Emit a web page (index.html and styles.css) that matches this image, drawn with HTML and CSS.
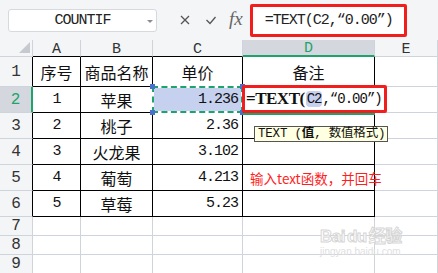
FILE: index.html
```html
<!DOCTYPE html>
<html lang="zh-CN">
<head>
    <meta charset="UTF-8">
    <title>TEXT 函数</title>
    <link rel="stylesheet" href="styles.css">
</head>
<body>
    <div class="toolbar">
        <div class="namebox">
            <span>COUNTIF</span>
            <i class="caret"></i>
        </div>
        <svg class="icon" viewBox="0 0 10 10"><path d="M1 1L9 9M9 1L1 9"/></svg>
        <svg class="icon" viewBox="0 0 10 10"><path d="M0.5 5L4 8.5L9.5 2"/></svg>
        <span class="fx">fx</span>
        <div class="formula">=TEXT(C2,“0.00”)</div>
    </div>

    <div class="sheet">
        <!-- 列标题 -->
        <div class="corner"><i class="tri"></i></div>
        <div class="ch top">A</div>
        <div class="ch top">B</div>
        <div class="ch top">C</div>
        <div class="ch on">D</div>
        <div class="ch">E</div>

        <!-- 1 -->
        <div class="rh t">1</div>
        <div class="c t">序号</div>
        <div class="c t">商品名称</div>
        <div class="c t">单价</div>
        <div class="c t">备注</div>
        <div class="c"></div>

        <!-- 2 -->
        <div class="rh on">2</div>
        <div class="c t num">1</div>
        <div class="c t">苹果</div>
        <div class="c t num right sel-cell">
            <span class="sel"></span>
            <i class="dot tl"></i><i class="dot bl"></i><i class="dot tr"></i><i class="dot br"></i>
            <span class="val">1.236</span>
        </div>
        <div class="c t active">
            <span class="edit"><b>=TEXT(</b><span class="ref">C2</span>,“0.00”)</span>
            <span class="tip">TEXT (<b>值</b>, 数值格式)</span>
        </div>
        <div class="c"></div>

        <!-- 3 -->
        <div class="rh t">3</div>
        <div class="c t num">2</div>
        <div class="c t">桃子</div>
        <div class="c t num right">2.36</div>
        <div class="c t"></div>
        <div class="c"></div>

        <!-- 4 -->
        <div class="rh t">4</div>
        <div class="c t num">3</div>
        <div class="c t">火龙果</div>
        <div class="c t num right">3.102</div>
        <div class="c t"></div>
        <div class="c"></div>

        <!-- 5 -->
        <div class="rh t">5</div>
        <div class="c t num">4</div>
        <div class="c t">葡萄</div>
        <div class="c t num right">4.213</div>
        <div class="c t left"><span class="note">输入text函数，并回车</span></div>
        <div class="c"></div>

        <!-- 6 -->
        <div class="rh t">6</div>
        <div class="c t num">5</div>
        <div class="c t">草莓</div>
        <div class="c t num right">5.23</div>
        <div class="c t"></div>
        <div class="c"></div>

        <!-- 7-9 -->
        <div class="rh">7</div>
        <div class="c"></div><div class="c"></div><div class="c"></div><div class="c"></div><div class="c"></div>
        <div class="rh">8</div>
        <div class="c"></div><div class="c"></div><div class="c"></div><div class="c"></div><div class="c"></div>
        <div class="rh">9</div>
        <div class="c"></div><div class="c"></div><div class="c"></div><div class="c"></div><div class="c"></div>

        <div class="mark">
            <span class="mark-logo">Bai<span class="paw">du</span>经验</span>
            <span class="mark-url">jingyan.baidu.com</span>
        </div>
    </div>
</body>
</html>
```

FILE: styles.css
```css
* {
    box-sizing: border-box;
    margin: 0;
    padding: 0;
}

html, body {
    width: 438px;
    height: 273px;
    overflow: hidden;
}

body {
    background-color: #fff;
    color: #222;
    font-family: "Liberation Mono", "Noto Sans CJK SC", monospace;
}

/* 编辑栏 */
.toolbar {
    height: 40px;
    display: flex;
    align-items: center;
    background-color: #f4f5f7;
}

.namebox {
    width: 149px;
    height: 23px;
    margin-left: 8px;
    margin-right: 23px;
    background-color: #fff;
    border: 1px solid #d6d9de;
    border-radius: 3px;
    display: flex;
    align-items: center;
    justify-content: center;
    position: relative;
    font-size: 15px;
    letter-spacing: -1px;
    color: #222;
}

.caret {
    position: absolute;
    right: 3px;
    top: 10px;
    border-left: 3px solid transparent;
    border-right: 3px solid transparent;
    border-top: 3px solid #8a8d93;
}

.icon {
    width: 10px;
    height: 10px;
    margin-right: 16px;
    fill: none;
    stroke: #555;
    stroke-width: 1.3;
}

.fx {
    font-family: "Liberation Serif", serif;
    font-style: italic;
    font-size: 19px;
    color: #666;
    margin-left: -3px;
    margin-right: 7px;
    margin-top: -3px;
}

.formula {
    width: 157px;
    height: 33px;
    border: 3px solid #f21d1d;
    border-radius: 2px;
    background-color: #fff;
    display: flex;
    align-items: center;
    padding-left: 12px;
    font-size: 15px;
    letter-spacing: -1px;
    color: #222;
}

/* 表格 */
.sheet {
    position: relative;
    display: grid;
    grid-template-columns: 33px 48px 72px 90px 132px 63px;
    grid-template-rows: 17px 30px repeat(5, 26px) repeat(3, 19px);
}

.sheet > div {
    display: flex;
    align-items: center;
    justify-content: center;
    border-right: 1px solid #cfd3dc;
    border-bottom: 1px solid #cfd3dc;
    position: relative;
}

.corner, .ch, .rh {
    background-color: #f4f5f7;
    color: #333;
    font-size: 15px;
}

.corner {
    justify-content: flex-end !important;
    align-items: flex-end !important;
    padding: 0 2px 3px 0;
}

.tri {
    border-left: 11px solid transparent;
    border-bottom: 11px solid #c6c9cf;
}

.ch {
    padding-top: 2px;
}

.ch.top {
    border-bottom-color: #000 !important;
}

.ch.on {
    background-color: #d4d7de;
    color: #1fa36d;
    border-bottom: 2px solid #1fa36d !important;
}

.rh {
    font-size: 16px;
}

.rh.t {
    border-right-color: #000 !important;
}

.rh.on {
    background-color: #d4d7de;
    color: #1fa36d;
    border-right: 2px solid #1fa36d !important;
}

.c {
    font-size: 16px;
    color: #111;
}

.c.t {
    border-right-color: #000 !important;
    border-bottom-color: #000 !important;
}

.num {
    font-size: 15px;
    letter-spacing: -1px;
}

.right {
    justify-content: flex-end !important;
    padding-right: 4px;
}

.left {
    justify-content: flex-start !important;
    padding-left: 7px;
}

/* 选中的 C2 */
.sel-cell {
    background-color: #c6d0ef;
    z-index: 1;
}

.sel {
    position: absolute;
    left: -1px;
    top: -1px;
    right: -1px;
    bottom: -1px;
    border: 2px dashed #1fa36d;
    background-color: #fff;
    box-shadow: inset 0 0 0 60px #c6d0ef;
}

.val {
    position: relative;
    z-index: 1;
}

.dot {
    position: absolute;
    width: 5px;
    height: 5px;
    background-color: #4a6fcf;
    z-index: 2;
}

.dot.tl { left: -3px; top: -3px; }
.dot.bl { left: -3px; bottom: -3px; }
.dot.tr { right: -3px; top: -3px; }
.dot.br { right: -3px; bottom: -3px; }

/* 正在编辑的 D2 */
.active {
    z-index: 3;
}

.active::after {
    content: "";
    position: absolute;
    left: 0;
    right: -1px;
    bottom: -3px;
    height: 2px;
    background-color: #1fa36d;
}

.edit {
    position: absolute;
    left: -1px;
    top: -2px;
    width: 145px;
    height: 28px;
    border: 3px solid #f21d1d;
    border-radius: 2px;
    background-color: #fff;
    display: flex;
    align-items: center;
    padding-left: 1px;
    font-size: 14px;
    letter-spacing: -1px;
    white-space: nowrap;
    z-index: 2;
}

.edit b {
    font-family: "Liberation Serif", serif;
    font-size: 17px;
    letter-spacing: -0.5px;
}

.ref {
    background-color: #c6d0ef;
    border-radius: 4px;
    padding: 0 1px;
    margin-left: 1px;
}

.tip {
    position: absolute;
    left: 11px;
    top: 39px;
    width: 134px;
    height: 16px;
    background-color: #ffffe1;
    border: 1px solid #555;
    font-size: 12.5px;
    letter-spacing: -0.2px;
    padding-left: 3px;
    line-height: 14px;
    white-space: nowrap;
    color: #111;
}

.tip b {
    font-weight: bold;
}

.note {
    white-space: nowrap;
    font-family: "Noto Sans CJK SC", sans-serif;
    font-size: 13.5px;
    color: #ff1f1f;
    z-index: 2;
}

/* 水印 */
.mark {
    position: absolute !important;
    left: 320px;
    top: 188px;
    width: 92px;
    border: none !important;
    flex-direction: column;
    align-items: flex-start !important;
    color: #e3e3e3;
    pointer-events: none;
}

.mark-logo {
    font-family: "Liberation Sans", "Noto Sans CJK SC", sans-serif;
    font-weight: bold;
    font-size: 17px;
    line-height: 18px;
    letter-spacing: -0.5px;
    -webkit-text-stroke: 1px #d6d6d6;
    color: #fff;
}

.paw {
    margin: 0 2px;
}

.mark-url {
    font-family: "Liberation Sans", sans-serif;
    font-size: 10px;
    line-height: 12px;
    color: #e0e0e0;
}
```
